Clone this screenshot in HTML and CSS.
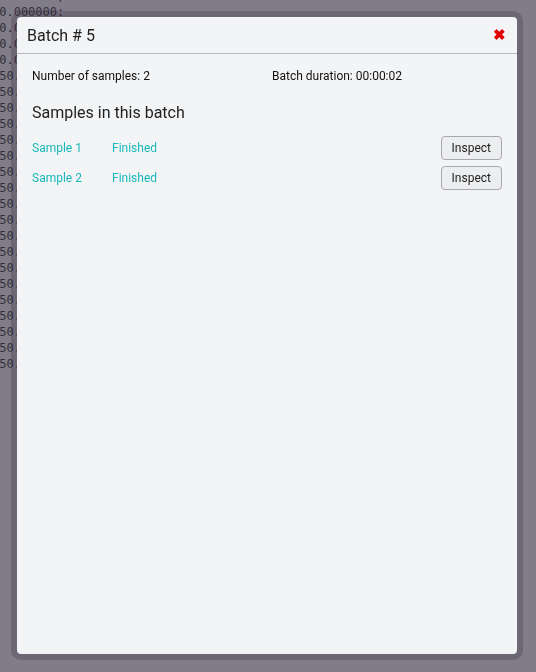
FILE: index.html
```html
<!DOCTYPE html>
<html lang="en">

<head>
    <meta charset="UTF-8">
    <title>Batch # 5</title>
    <link rel="stylesheet" href="styles.css">
</head>

<body>
    <pre class="log">  .......;
10.000000:
10.0
10.0
10.0
150.
150.
150.
150.
150.
150.
150.
150.
150.
150.
150.
150.
150.
150.
150.
150.
150.
150.
150.</pre>

    <div class="overlay">
        <div class="modal">
            <div class="modal-header">
                <h1>Batch # 5</h1>
                <span class="close">&#10006;</span>
            </div>
            <div class="modal-body">
                <div class="stats">
                    <p>Number of samples: 2</p>
                    <p>Batch duration: 00:00:02</p>
                </div>

                <h2>Samples in this batch</h2>

                <div class="sample">
                    <span class="name">Sample 1</span>
                    <span class="status">Finished</span>
                    <button>Inspect</button>
                </div>
                <div class="sample">
                    <span class="name">Sample 2</span>
                    <span class="status">Finished</span>
                    <button>Inspect</button>
                </div>
            </div>
        </div>
    </div>
</body>

</html>
```

FILE: styles.css
```css
body {
    margin: 0;
    height: 672px;
    overflow: hidden;
    background: #f2f2f2;
    font-family: "Roboto", "Noto Sans", sans-serif;
}

.log {
    width: 76px;
    overflow: hidden;
    margin: -12px 0 0 -8px;
    font-family: "DejaVu Sans Mono", monospace;
    font-size: 12px;
    line-height: 16px;
    color: #111;
}

.overlay {
    position: fixed;
    inset: 0;
    background: rgba(68, 62, 80, 0.66);
    padding: 11px 13px 12px 11px;
}

.modal {
    height: 100%;
    box-sizing: border-box;
    border: 6px solid rgba(30, 15, 40, 0.2);
    border-radius: 10px;
    background: #f3f4f6;
    background-clip: padding-box;
    display: flex;
    flex-direction: column;
}

.modal-header {
    display: flex;
    align-items: center;
    justify-content: space-between;
    height: 36px;
    padding: 0 11px 0 10px;
    border-bottom: 1px solid #b9b9be;
}

.modal-header h1 {
    margin: 0;
    font-size: 16px;
    font-weight: 400;
    color: #222;
}

.close {
    color: #e00000;
    font-size: 15px;
    font-weight: bold;
}

.modal-body {
    padding: 15px 15px;
}

.stats {
    display: grid;
    grid-template-columns: 240px 1fr;
}

.stats p {
    margin: 0;
    font-size: 12px;
    color: #111;
}

.modal-body h2 {
    margin: 20px 0 11px;
    font-size: 16px;
    font-weight: 400;
    color: #222;
}

.sample {
    display: flex;
    align-items: center;
    height: 30px;
    font-size: 12px;
    color: #1ab8bb;
}

.sample .name {
    width: 80px;
}

.sample button {
    margin-left: auto;
    height: 24px;
    font-family: "Roboto", sans-serif;
    font-size: 12px;
    color: #222;
    background: #eceef0;
    border: 1px solid #a9a9ad;
    border-radius: 4px;
    padding: 0 10px;
}
```
